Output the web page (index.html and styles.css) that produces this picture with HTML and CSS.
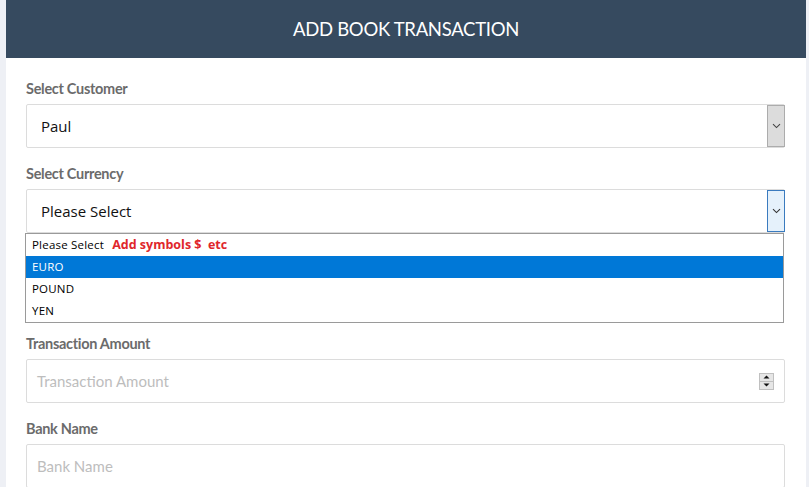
FILE: index.html
```html
<!DOCTYPE html>
<html>
<head>
<meta charset="utf-8">
<link rel="stylesheet" href="styles.css">
</head>
<body>
<div class="page">
  <div class="card">
    <div class="card-header">ADD BOOK TRANSACTION</div>
    <form class="form">
      <div class="group">
        <label class="label">Select Customer</label>
        <div class="select">
          <span class="select-value">Paul</span>
          <span class="select-btn">
            <svg width="9" height="6" viewBox="0 0 9 6"><path d="M1 1.2 L4.5 4.6 L8 1.2" fill="none" stroke="#444" stroke-width="1.1"/></svg>
          </span>
        </div>
      </div>
      <div class="group">
        <label class="label">Select Currency</label>
        <div class="select">
          <span class="select-value">Please Select</span>
          <span class="select-btn active">
            <svg width="9" height="6" viewBox="0 0 9 6"><path d="M1 1.2 L4.5 4.6 L8 1.2" fill="none" stroke="#333" stroke-width="1.1"/></svg>
          </span>
        </div>
        <ul class="listbox">
          <li class="option">Please Select <span class="note">Add symbols $&nbsp; etc</span></li>
          <li class="option selected">EURO</li>
          <li class="option">POUND</li>
          <li class="option">YEN</li>
        </ul>
      </div>
      <div class="group after-list">
        <label class="label">Transaction Amount</label>
        <div class="input">
          <span class="placeholder">Transaction Amount</span>
          <span class="spinner">
            <span class="spin-half"><svg width="7" height="4" viewBox="0 0 7 4"><path d="M0.5 3.5 L3.5 0.5 L6.5 3.5 Z" fill="#111"/></svg></span>
            <span class="spin-half"><svg width="7" height="4" viewBox="0 0 7 4"><path d="M0.5 0.5 L3.5 3.5 L6.5 0.5 Z" fill="#111"/></svg></span>
          </span>
        </div>
      </div>
      <div class="group">
        <label class="label">Bank Name</label>
        <div class="input">
          <span class="placeholder">Bank Name</span>
        </div>
      </div>
    </form>
  </div>
</div>
</body>
</html>
```

FILE: styles.css
```css
* { box-sizing: border-box; }
html, body { margin: 0; padding: 0; }
body {
  background: #eef0f5;
  font-family: Lato, "Open Sans", sans-serif;
  height: 487px;
  overflow: hidden;
}
.page {
  padding: 0 3px 0 6px;
}
.card {
  background: #fff;
  height: 487px;
}
.card-header {
  height: 58px;
  background: #364a5f;
  color: #fff;
  font-family: Lato, sans-serif;
  font-size: 18.5px;
  display: flex;
  align-items: center;
  justify-content: center;
  letter-spacing: -0.3px;
}
.form {
  padding: 23px 21px 0 20px;
  display: flex;
  flex-direction: column;
}
.group {
  display: flex;
  flex-direction: column;
  margin-bottom: 18px;
}
.group.after-list { margin-top: -5px; }
.label {
  font-family: Lato, sans-serif;
  font-weight: 700;
  font-size: 14.5px;
  line-height: 16px;
  color: #6b6b6b;
  margin-bottom: 7px;
  letter-spacing: -0.3px;
}
.select, .input {
  height: 44px;
  border: 1px solid #dcdcdc;
  border-radius: 2px;
  display: flex;
  align-items: center;
  position: relative;
}
.select-value {
  flex: 1;
  font-family: "Open Sans", "Noto Sans", sans-serif;
  font-size: 15px;
  color: #111;
  padding-left: 14px;
}
.select-btn {
  width: 18px;
  align-self: stretch;
  background: #dcdcdc;
  border: 1px solid #acacac;
  display: flex;
  align-items: center;
  justify-content: center;
  margin: 0 -1px 0 0;
}
.select-btn.active {
  background: #e5f1fb;
  border-color: #3a7bbf;
}
.listbox {
  list-style: none;
  margin: 0 1px 0 -1px;
  padding: 0;
  border: 1px solid #9a9a9a;
  font-family: "Open Sans", "Noto Sans", sans-serif;
  font-size: 11.5px;
  color: #000;
}
.option {
  height: 22px;
  line-height: 22px;
  padding-left: 6px;
  letter-spacing: 0.2px;
}
.option.selected {
  background: #0078d7;
  color: #fff;
}
.note {
  color: #e0262b;
  font-weight: 700;
  font-size: 12.5px;
  margin-left: 5px;
  letter-spacing: 0;
}
.placeholder {
  flex: 1;
  font-family: Lato, sans-serif;
  font-size: 15px;
  color: #bdbdbd;
  padding-left: 10px;
}
.spinner {
  width: 15px;
  height: 17px;
  border: 1px solid #c0c0c0;
  background: #e6e6e6;
  display: flex;
  flex-direction: column;
  margin-right: 10px;
}
.spin-half {
  flex: 1;
  display: flex;
  align-items: center;
  justify-content: center;
}
.spin-half + .spin-half { border-top: 1px solid #c0c0c0; }
```
